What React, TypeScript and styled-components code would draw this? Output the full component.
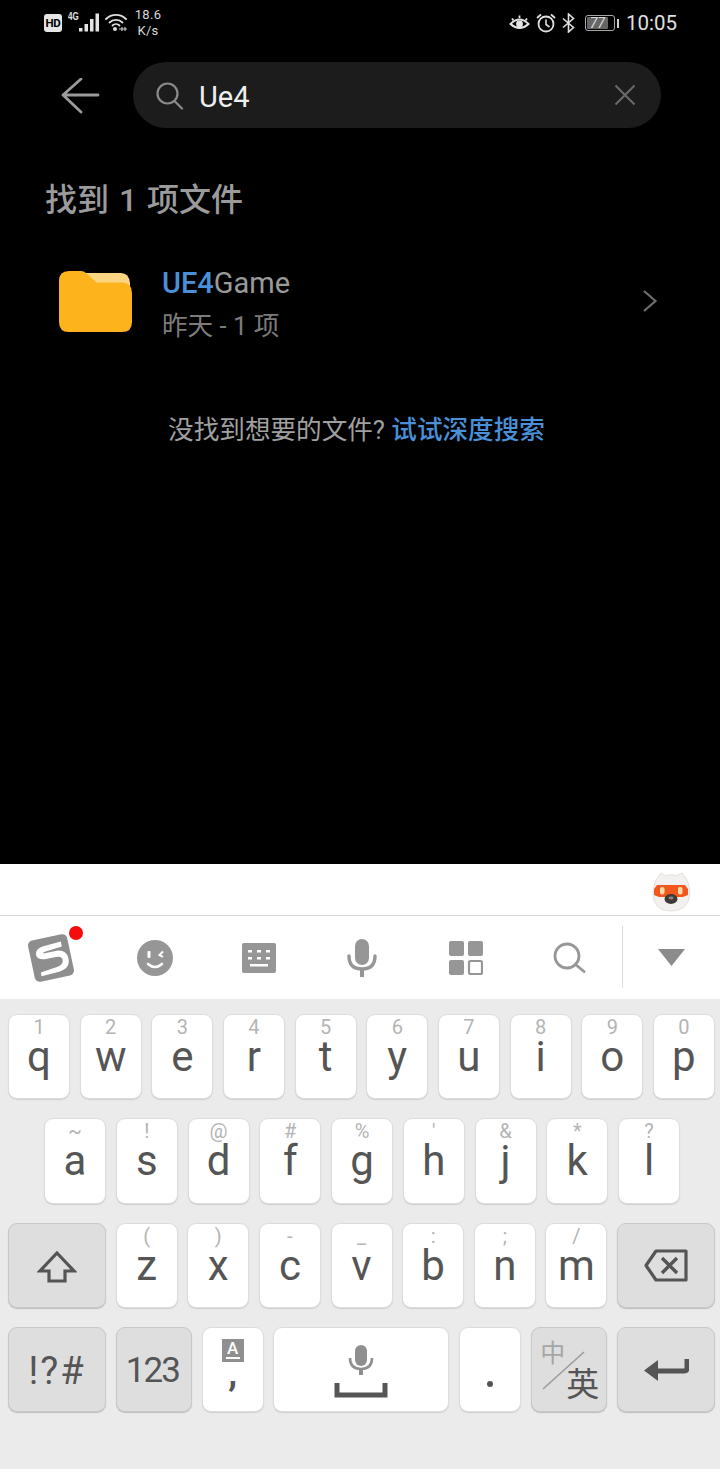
import React from "react";
import styled, { createGlobalStyle } from "styled-components";

const Global = createGlobalStyle`
  html, body { margin: 0; padding: 0; background: #000; }
  body { font-family: Roboto, "Noto Sans CJK SC", sans-serif; }
  * { box-sizing: border-box; }
`;

const Page = styled.div`
  width: 720px;
  height: 1469px;
  display: flex;
  flex-direction: column;
  overflow: hidden;
`;
const Main = styled.main`
  height: 864px;
  background: #000;
  display: flex;
  flex-direction: column;
`;
const StatusBar = styled.div`
  height: 44px;
  padding: 8px 43px 0 44px;
  display: flex;
  justify-content: space-between;
  align-items: flex-start;
  color: #e4e4e4;
`;
const StatusGroup = styled.div`
  display: flex;
  align-items: center;
  height: 30px;
`;
const HdBadge = styled.span`
  width: 18px;
  height: 18px;
  margin-top: -1px;
  border-radius: 3px;
  background: #e6e6e6;
  color: #000;
  font: 700 11.5px/18px Roboto, sans-serif;
  text-align: center;
  letter-spacing: -0.3px;
`;
const NetType = styled.span`
  font: 700 10px/10px "Liberation Sans", sans-serif;
  margin: -12px 0 0 6px;
  width: 11px;
  transform: scaleX(0.8);
  transform-origin: left;
`;
const Speed = styled.span`
  margin-left: 7px;
  width: 28px;
  margin-top: -1px;
  font: 400 13px/16px Roboto, sans-serif;
  text-align: center;
  letter-spacing: 0.3px;
  color: #d8d8d8;
`;
const BatteryBody = styled.span`
  width: 30px;
  height: 16px;
  margin-left: 10px;
  border: 1px solid #a8a8a8;
  border-radius: 3px;
  padding: 1px;
  display: flex;
`;
const BatteryFill = styled.span`
  width: 80%;
  background: #666;
  border-radius: 1px;
  color: #dcdcdc;
  font: italic 400 14px/12px Roboto, sans-serif;
  text-align: center;
`;
const BatteryNub = styled.span`
  width: 2px;
  height: 9px;
  margin-left: 2px;
  background: #cfcfcf;
`;
const Clock = styled.span`
  margin-left: 7px;
  font: 400 20.5px/30px Roboto, sans-serif;
  color: #e0e0e0;
`;
const SearchHeader = styled.div`
  margin-top: 18px;
  height: 66px;
  padding-left: 61px;
  padding-right: 59px;
  display: flex;
  align-items: center;
  gap: 33px;
`;
const SearchPill = styled.div`
  flex: 1;
  height: 66px;
  border-radius: 33px;
  background: #1c1c1c;
  display: flex;
  align-items: center;
  padding: 0 25px 0 23px;
`;
const SearchText = styled.span`
  flex: 1;
  margin-left: 15px;
  margin-top: 3px;
  font: 400 29px/36px Roboto, sans-serif;
  color: #efefef;
`;
const Title = styled.h1`
  margin: 50px 0 0 45px;
  font: 500 32px/44px Roboto, "Noto Sans CJK SC", sans-serif;
  word-spacing: 2px;
  color: #9b9b9b;
`;
const ResultRow = styled.div`
  margin-top: 43px;
  padding: 0 62px 0 58px;
  display: flex;
  align-items: flex-start;
`;
const ResultText = styled.div`
  flex: 1;
  margin-left: 29px;
  display: flex;
  flex-direction: column;
`;
const ResultName = styled.div`
  font: 400 29px/36px Roboto, sans-serif;
  color: #9a9a9a;
`;
const Highlight = styled.span`
  color: #4a90d9;
  font-weight: 500;
`;
const ResultMeta = styled.div`
  margin-top: 8px;
  font: 400 25.6px/34px Roboto, "Noto Sans CJK SC", sans-serif;
  color: #7c7c7c;
`;
const DeepSearch = styled.p`
  margin: 69px 0 0 0;
  text-align: center;
  font: 400 25.6px/36px Roboto, "Noto Sans CJK SC", sans-serif;
  color: #a0a0a0;
  padding-right: 7px;
`;
const DeepLink = styled.span`
  color: #4a90d9;
  font-weight: 500;
`;
const Keyboard = styled.section`
  flex: 1;
  background: #ebebeb;
  display: flex;
  flex-direction: column;
`;
const SuggestBar = styled.div`
  height: 52px;
  background: #fff;
  border-bottom: 1px solid #d6d6d6;
  display: flex;
  justify-content: flex-end;
  align-items: flex-start;
  padding: 4px 29px 0 0;
`;
const Toolbar = styled.div`
  height: 83px;
  background: #fff;
  display: flex;
  align-items: center;
`;
const ToolCell = styled.div`
  width: 103.5px;
  height: 82px;
  display: flex;
  align-items: center;
  justify-content: center;
  position: relative;
`;
const RedDot = styled.span`
  position: absolute;
  left: 69px;
  top: 9px;
  width: 14px;
  height: 14px;
  border-radius: 50%;
  background: #f50d0d;
`;
const ToolDivider = styled.div`
  width: 1px;
  height: 62px;
  background: #dcdcdc;
  margin: -2px 0 0 1px;
`;
const ToolLast = styled.div`
  flex: 1;
  display: flex;
  justify-content: center;
`;
const Keys = styled.div`
  padding-top: 15px;
  display: flex;
  flex-direction: column;
  gap: 19px;
`;
const Row = styled.div<{ $l: number; $r: number }>`
  height: 85.33px;
  padding: 0 ${(p) => p.$r}px 0 ${(p) => p.$l}px;
  display: flex;
  justify-content: space-between;
`;
const KeyBase = styled.div<{ $w?: number; $fn?: boolean }>`
  width: ${(p) => p.$w ?? 62}px;
  height: 100%;
  flex: none;
  border-radius: 9px;
  background: ${(p) => (p.$fn ? "#dedede" : "#fff")};
  border: 1px solid ${(p) => (p.$fn ? "#c9c9c9" : "#dcdcdc")};
  box-shadow: 0 1px 1px ${(p) => (p.$fn ? "rgba(0,0,0,.2)" : "rgba(0,0,0,.12)")};
  color: #555;
  position: relative;
`;
const LetterKey = styled(KeyBase)`
  display: flex;
  flex-direction: column;
  align-items: center;
  padding-top: 0;
`;
const Hint = styled.span`
  height: 24px;
  font: 400 20px/24px Roboto, sans-serif;
  color: #b4b4b4;
`;
const Letter = styled.span`
  font: 400 42px/42px Roboto, sans-serif;
  margin-top: -3px;
`;
const CenterKey = styled(KeyBase)`
  display: flex;
  align-items: center;
  justify-content: center;
`;
const FnLabel = styled.span<{ $size: number; $track: number; $shift?: number }>`
  font: 400 ${(p) => p.$size}px/40px Roboto, sans-serif;
  letter-spacing: ${(p) => p.$track}px;
  margin-left: ${(p) => p.$shift ?? 0}px;
  margin-top: 3px;
  color: #555;
`;
const CommaKey = styled(KeyBase)`
  display: flex;
  flex-direction: column;
  align-items: center;
  padding-top: 11px;
`;
const ABox = styled.span`
  width: 22px;
  height: 23px;
  background: #8f8f8f;
  color: #fff;
  font: 500 17px/18px Roboto, sans-serif;
  text-align: center;
  display: block;
  position: relative;
`;
const AUnderline = styled.span`
  position: absolute;
  left: 4px;
  right: 4px;
  bottom: 3px;
  height: 2px;
  background: #fff;
`;
const Comma = styled.span`
  font: 700 36px/30px Roboto, sans-serif;
  color: #555;
  margin-top: -4px;
`;
const SpaceKey = styled(KeyBase)`
  display: flex;
  flex-direction: column;
  align-items: center;
  padding-top: 17px;
`;
const DotKey = styled(KeyBase)`
  display: flex;
  justify-content: center;
  padding-top: 53px;
`;
const Dot = styled.span`
  width: 6px;
  height: 6px;
  border-radius: 50%;
  background: #555;
`;
const LangKey = styled(KeyBase)`
  color: #555;
`;
const LangZh = styled.span`
  position: absolute;
  left: 8px;
  top: 7px;
  font: 400 25px/32px "Noto Sans CJK SC", sans-serif;
  color: #a6a6a6;
`;
const LangEn = styled.span`
  position: absolute;
  left: 34px;
  top: 32px;
  font: 400 33px/44px "Noto Sans CJK SC", sans-serif;
  color: #555;
`;
const LangSlash = styled.svg`
  position: absolute;
  left: 10px;
  top: 23px;
`;

const Icon = ({ w, h, children, mt }: { w: number; h: number; children: React.ReactNode; mt?: number }) => (
  <svg width={w} height={h} viewBox={`0 0 ${w} ${h}`} style={{ flex: "none", marginTop: mt ?? 0 }}>
    {children}
  </svg>
);

const row1: [string, string][] = [["1","q"],["2","w"],["3","e"],["4","r"],["5","t"],["6","y"],["7","u"],["8","i"],["9","o"],["0","p"]];
const row2: [string, string][] = [["~","a"],["!","s"],["@","d"],["#","f"],["%","g"],["'","h"],["&","j"],["*","k"],["?","l"]];
const row3: [string, string][] = [["(","z"],[")","x"],["-","c"],["_","v"],[":","b"],[";","n"],["/","m"]];

const LK = ({ h, l }: { h: string; l: string }) => (
  <LetterKey>
    <Hint>{h}</Hint>
    <Letter>{l}</Letter>
  </LetterKey>
);

export default function App() {
  return (
    <Page>
      <Global />
      <Main>
        <StatusBar>
          <StatusGroup>
            <HdBadge>HD</HdBadge>
            <NetType>4G</NetType>
            <Icon w={20} h={19} mt={-2}>
              <g fill="#e4e4e4">
                <rect x="0" y="15" width="3.5" height="3.500" />
                <rect x="5.500" y="11" width="3.500" height="7.500" />
                <rect x="11" y="6" width="3.500" height="12.500" />
                <rect x="16.500" y="0.500" width="3.500" height="18" />
              </g>
            </Icon>
            <span style={{ width: 6 }} />
            <Icon w={22} h={20} mt={-2}>
              <g fill="none" stroke="#e0e0e0" strokeWidth="1.8" strokeLinecap="round">
                <path d="M1 7 A14 14 0 0 1 21 7" />
                <path d="M4.500 10.500 A9.500 9.500 0 0 1 17.500 10.500" />
                <path d="M7.500 13.500 A5 5 0 0 1 14.500 13.500" />
              </g>
              <circle cx="10" cy="17" r="2" fill="#e0e0e0" />
              <path d="M14 17h8M17 15v4M20 15v4" stroke="#c8c8c8" strokeWidth="1.2" />
            </Icon>
            <Speed>18.6<br />K/s</Speed>
          </StatusGroup>
          <StatusGroup>
            <Icon w={21} h={18}>
              <path d="M1.500 10 Q10.500 1 19.500 10 Q10.500 18 1.500 10Z" fill="none" stroke="#e4e4e4" strokeWidth="2" />
              <circle cx="10.500" cy="10" r="3.400" fill="#e4e4e4" />
              <path d="M3 4.500L4.500 6.500M10.500 1.500V4M18 4.500L16.500 6.500" stroke="#e4e4e4" strokeWidth="1.800" />
            </Icon>
            <span style={{ width: 6 }} />
            <Icon w={20} h={20}>
              <circle cx="10" cy="11" r="7.500" fill="none" stroke="#e0e0e0" strokeWidth="1.800" />
              <path d="M10 6.500V11.500L13.500 14" fill="none" stroke="#e0e0e0" strokeWidth="1.600" />
              <path d="M1 5L5 1.500M19 5L15 1.500" stroke="#e0e0e0" strokeWidth="1.800" />
            </Icon>
            <span style={{ width: 6 }} />
            <Icon w={13} h={20}>
              <path d="M1 5.500L11.500 14.500L6.500 19V1L11.500 5.500L1 14.500" fill="none" stroke="#e0e0e0" strokeWidth="1.600" />
            </Icon>
            <BatteryBody>
              <BatteryFill>77</BatteryFill>
            </BatteryBody>
            <BatteryNub />
            <Clock>10:05</Clock>
          </StatusGroup>
        </StatusBar>
        <SearchHeader>
          <Icon w={39} h={38} mt={3}>
            <path d="M37 17H2M20 1L2 17L20 34" fill="none" stroke="#9a9a9a" strokeWidth="2.800" strokeLinecap="round" strokeLinejoin="round" />
          </Icon>
          <SearchPill>
            <Icon w={28} h={28} mt={1}>
              <circle cx="11.500" cy="11.500" r="10" fill="none" stroke="#8a8a8a" strokeWidth="2.200" />
              <path d="M18.500 19L26 26.500" stroke="#8a8a8a" strokeWidth="2.200" strokeLinecap="round" />
            </Icon>
            <SearchText>Ue4</SearchText>
            <Icon w={22} h={22}>
              <path d="M1.500 1.500L20.500 20.500M20.500 1.500L1.500 20.500" stroke="#6a6a6a" strokeWidth="2" />
            </Icon>
          </SearchPill>
        </SearchHeader>
        <Title>找到 1 项文件</Title>
        <ResultRow>
          <Icon w={75} h={63} mt={5}>
            <path d="M24 3H63Q71 3 72 13V22H36Z" fill="#fcd583" />
            <path d="M11 1H23Q26 1 28 3L37 11Q38 12.500 40 12.500H64Q74 12.500 74 23V52Q74 62 64 62H11Q1 62 1 52V11Q1 1 11 1Z" fill="#fdb31c" />
          </Icon>
          <ResultText>
            <ResultName><Highlight>UE4</Highlight>Game</ResultName>
            <ResultMeta>昨天 - 1 项</ResultMeta>
          </ResultText>
          <Icon w={16} h={24} mt={24}>
            <path d="M2 2L13.500 12L2 22" fill="none" stroke="#6e6e6e" strokeWidth="2.200" />
          </Icon>
        </ResultRow>
        <DeepSearch>没找到想要的文件? <DeepLink>试试深度搜索</DeepLink></DeepSearch>
      </Main>
      <Keyboard>
        <SuggestBar>
          <Icon w={39} h={44}>
            <path d="M9 5L13 7.500Q19 6 25 7.500L30 5Q38 14 38 25Q37 43 19 43Q1 43 1 25Q1 14 9 5Z" fill="#f3f1f0" stroke="#e4e2e0" />
            <path d="M5 17H33L36 21V27L31 29H7L2 27V21Z" fill="#f2581e" />
            <rect x="8" y="19" width="4.500" height="7.500" rx="2" fill="#fbd9a8" />
            <rect x="26" y="19" width="4.500" height="7.500" rx="2" fill="#fbd9a8" />
            <ellipse cx="19" cy="31" rx="6.500" ry="5" fill="#3f3a38" />
            <ellipse cx="19" cy="30" rx="2.500" ry="1.400" fill="#8c8583" />
          </Icon>
        </SuggestBar>
        <Toolbar>
          <ToolCell>
            <Icon w={52} h={50} mt={-1}>
              <g transform="rotate(-12 25 26)">
                <rect x="5" y="5" width="40" height="42" rx="5" fill="#8e8e8e" />
                <path d="M38 12L20 13Q11 14 11 20Q11 25 19 26H30Q36 26 36 30Q36 35 29 36L12 38L12 42L30 41Q42 40 42 30Q42 21 32 20H20Q18 20 18 19.500Q18 19 21 18.500L38 17Z" fill="#fff" />
              </g>
            </Icon>
            <RedDot />
          </ToolCell>
          <ToolCell>
            <Icon w={36} h={36}>
              <circle cx="18" cy="18" r="18" fill="#969696" />
              <rect x="10.500" y="11" width="3" height="7" rx="1" fill="#fff" />
              <path d="M26 11.500L22.500 15L26 17" fill="none" stroke="#fff" strokeWidth="2" />
              <path d="M11 24Q18 30 25 24" fill="none" stroke="#fff" strokeWidth="2.600" strokeLinecap="round" />
            </Icon>
          </ToolCell>
          <ToolCell>
            <Icon w={34} h={30}>
              <rect width="34" height="30" rx="2" fill="#969696" />
              <g fill="#fff">
                <rect x="6" y="7" width="4" height="2.500" /><rect x="15" y="7" width="4" height="2.500" /><rect x="24" y="7" width="4" height="2.500" />
                <rect x="6" y="14" width="4" height="2.500" /><rect x="15" y="14" width="4" height="2.500" /><rect x="24" y="14" width="4" height="2.500" />
                <rect x="8" y="21" width="18" height="2.500" />
              </g>
            </Icon>
          </ToolCell>
          <ToolCell>
            <Icon w={30} h={38}>
              <rect x="8" y="0" width="14" height="26" rx="7" fill="#969696" />
              <path d="M2 17Q2 30 15 30Q28 30 28 17" fill="none" stroke="#969696" strokeWidth="3.400" strokeLinecap="round" />
              <rect x="13" y="29" width="4" height="9" fill="#969696" />
            </Icon>
          </ToolCell>
          <ToolCell>
            <Icon w={34} h={34}>
              <rect x="0" y="0" width="15" height="15" rx="2" fill="#969696" />
              <rect x="19" y="0" width="15" height="15" rx="2" fill="#969696" />
              <rect x="0" y="19" width="15" height="15" rx="2" fill="#969696" />
              <rect x="20" y="20" width="13" height="13" rx="1.500" fill="none" stroke="#969696" strokeWidth="2.200" />
            </Icon>
          </ToolCell>
          <ToolCell>
            <Icon w={33} h={31}>
              <circle cx="14" cy="14" r="12" fill="none" stroke="#969696" strokeWidth="2.800" />
              <path d="M22.500 22.500L31 29.500" stroke="#969696" strokeWidth="2.800" strokeLinecap="round" />
            </Icon>
          </ToolCell>
          <ToolDivider />
          <ToolLast>
            <Icon w={27} h={17}>
              <path d="M0 0H27L13.500 17Z" fill="#8c8c8c" />
            </Icon>
          </ToolLast>
        </Toolbar>
        <Keys>
          <Row $l={8} $r={5}>
            {row1.map(([h, l]) => <LK key={l} h={h} l={l} />)}
          </Row>
          <Row $l={44} $r={40}>
            {row2.map(([h, l]) => <LK key={l} h={h} l={l} />)}
          </Row>
          <Row $l={8} $r={5}>
            <CenterKey $w={98} $fn>
              <Icon w={40} h={32} mt={3}>
                <path d="M20 2L37 20H28V30H12V20H3Z" fill="none" stroke="#555" strokeWidth="3.200" />
              </Icon>
            </CenterKey>
            {row3.map(([h, l]) => <LK key={l} h={h} l={l} />)}
            <CenterKey $w={98} $fn>
              <Icon w={44} h={33}>
                <path d="M12 2H42V31H12L2 16.500Z" fill="none" stroke="#555" strokeWidth="3.200" strokeLinejoin="round" />
                <path d="M18 9L33 24M33 9L18 24" stroke="#555" strokeWidth="3.400" />
              </Icon>
            </CenterKey>
          </Row>
          <Row $l={8} $r={5}>
            <CenterKey $w={98} $fn><FnLabel $size={38} $track={2}>!?#</FnLabel></CenterKey>
            <CenterKey $w={76} $fn><FnLabel $size={35} $track={-2} $shift={-3}>123</FnLabel></CenterKey>
            <CommaKey>
              <ABox>A<AUnderline /></ABox>
              <Comma>,</Comma>
            </CommaKey>
            <SpaceKey $w={176}>
              <Icon w={26} h={30}>
                <rect x="7" y="0" width="12" height="21" rx="6" fill="#8f8f8f" />
                <path d="M2 13Q2 24 13 24Q24 24 24 13" fill="none" stroke="#8f8f8f" strokeWidth="2.600" />
                <rect x="11" y="24" width="4" height="6" fill="#8f8f8f" />
              </Icon>
              <Icon w={54} h={15} mt={8}>
                <path d="M3 0V12H51V0" fill="none" stroke="#555" strokeWidth="5" />
              </Icon>
            </SpaceKey>
            <DotKey><Dot /></DotKey>
            <LangKey $w={76} $fn>
              <LangZh>中</LangZh>
              <LangSlash width="44" height="40" viewBox="0 0 44 40">
                <path d="M1 38L42 1" stroke="#9a9a9a" strokeWidth="1.500" />
              </LangSlash>
              <LangEn>英</LangEn>
            </LangKey>
            <CenterKey $w={98} $fn>
              <Icon w={46} h={24}>
                <path d="M44 1V10Q44 13 41 13H12" fill="none" stroke="#555" strokeWidth="5" />
                <path d="M1 12.500L15 2V23Z" fill="#555" />
              </Icon>
            </CenterKey>
          </Row>
        </Keys>
      </Keyboard>
    </Page>
  );
}
